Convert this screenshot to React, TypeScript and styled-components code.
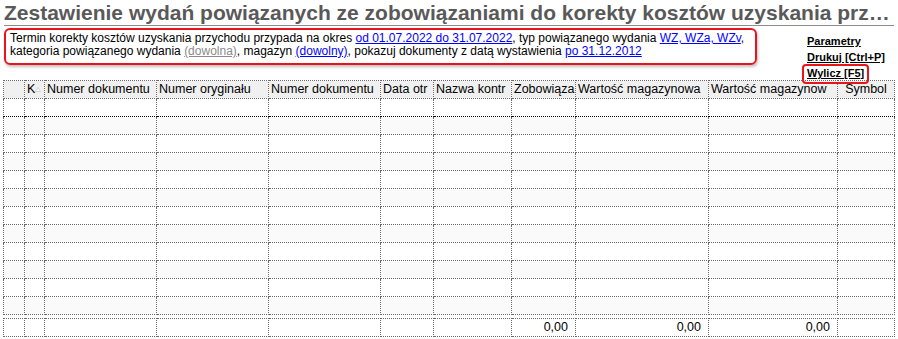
import React from 'react';
import styled, { createGlobalStyle } from 'styled-components';

const GlobalStyle = createGlobalStyle`
  html, body {
    margin: 0;
    padding: 0;
    background: #fff;
  }
  body {
    font-family: "Liberation Sans", Arial, sans-serif;
    font-size: 12px;
    color: #000;
  }
`;

const Page = styled.div`
  width: 898px;
  height: 339px;
  padding: 0 4px 0 3px;
  box-sizing: border-box;
  overflow: hidden;
`;

const Title = styled.h1`
  margin: 0 0 0 1px;
  padding-top: 2px;
  height: 23px;
  font: bold 21px "Liberation Sans", Arial, sans-serif;
  line-height: 22px;
  color: #595959;
  border-bottom: 1px solid #8c8c8c;
  white-space: nowrap;
  overflow: hidden;
  text-overflow: ellipsis;
`;

const TopRow = styled.div`
  display: flex;
  align-items: flex-start;
  height: 54px;
`;

const FilterBox = styled.div`
  margin-top: 2px;
  margin-left: 1px;
  width: 745px;
  height: 31px;
  padding: 2px 0 0 4px;
  border: 2px solid #e8141b;
  border-radius: 6px;
  box-shadow: 1px 2px 3px rgba(0, 0, 0, 0.25);
  line-height: 13px;
  font-size: 12px;
`;

const Link = styled.a<{ $muted?: boolean }>`
  color: ${p => (p.$muted ? '#8a8a8a' : '#0000ff')};
  text-decoration: underline;
  cursor: pointer;
`;

const Actions = styled.div`
  margin-left: 50px;
  padding-top: 9px;
  display: flex;
  flex-direction: column;
  align-items: flex-start;
  gap: 3px;
`;

const Action = styled.a<{ $boxed?: boolean }>`
  font: bold 11px "Liberation Sans", Arial, sans-serif;
  line-height: 13px;
  color: #000;
  text-decoration: underline;
  padding: ${p => (p.$boxed ? '1px 3px 2px 3px' : '0')};
  margin: ${p => (p.$boxed ? '-3px 0 0 -5px' : '0')};
  border: ${p => (p.$boxed ? '2px solid #e8141b' : 'none')};
  border-radius: 4px;
`;

const Grid = styled.table`
  border-collapse: collapse;
  table-layout: fixed;
  width: 891px;
  font-size: 12.5px;
  & + & {
    margin-top: 3px;
  }
`;

const HeadCell = styled.th<{ $align?: string }>`
  height: 17px;
  padding: 0 2px;
  background: #f0f0f0;
  border: 1px dotted #6a6a6a;
  font-weight: normal;
  text-align: ${p => p.$align || 'left'};
  white-space: nowrap;
  overflow: hidden;
  text-overflow: clip;
  line-height: 15px;
`;

const Row = styled.tr<{ $alt?: boolean; $selected?: boolean }>`
  background: ${p => (p.$alt ? '#fafafa' : '#fff')};
  & > td {
    border-top: 1px dotted ${p => (p.$selected ? '#000' : '#6a6a6a')};
    border-bottom: 1px dotted ${p => (p.$selected ? '#000' : '#6a6a6a')};
  }
`;

const Cell = styled.td<{ $num?: boolean }>`
  height: 17px;
  padding: 0 7px 0 2px;
  border: 1px dotted #6a6a6a;
  text-align: ${p => (p.$num ? 'right' : 'left')};
  white-space: nowrap;
  overflow: hidden;
  line-height: 15px;
`;

const SortMark = () => (
  <svg width="6" height="5" viewBox="0 0 6 5" style={{ verticalAlign: 'middle' }}>
    <path d="M3 0.5 L5.5 4.5 L0.5 4.5 Z" fill="#fff" stroke="#c8c8c8" strokeWidth="0.8" />
  </svg>
);

const widths = [21, 20, 112, 112, 112, 53, 78, 64, 133, 129, 57];
const headers = [
  '',
  'K',
  'Numer dokumentu',
  'Numer oryginału',
  'Numer dokumentu',
  'Data otr',
  'Nazwa kontr',
  'Zobowiąza',
  'Wartość magazynowa',
  'Wartość magazynow',
  'Symbol',
];

const Cols = () => (
  <colgroup>
    {widths.map((w, i) => (
      <col key={i} style={{ width: w }} />
    ))}
  </colgroup>
);

export default function App() {
  const rows = Array.from({ length: 12 }, (_, i) => i);
  return (
    <Page>
      <GlobalStyle />
      <Title>Zestawienie wydań powiązanych ze zobowiązaniami do korekty kosztów uzyskania przychodu</Title>
      <TopRow>
        <FilterBox>
          Termin korekty kosztów uzyskania przychodu przypada na okres{' '}
          <Link>od 01.07.2022 do 31.07.2022</Link>, typ powiązanego wydania <Link>WZ, WZa, WZv</Link>,
          <br />
          kategoria powiązanego wydania <Link $muted>(dowolna)</Link>, magazyn <Link>(dowolny)</Link>, pokazuj
          dokumenty z datą wystawienia <Link>po 31.12.2012</Link>
        </FilterBox>
        <Actions>
          <Action>Parametry</Action>
          <Action>Drukuj [Ctrl+P]</Action>
          <Action $boxed>Wylicz [F5]</Action>
        </Actions>
      </TopRow>
      <Grid>
        <Cols />
        <thead>
          <tr>
            {headers.map((h, i) => (
              <HeadCell key={i} $align={i === 10 ? 'center' : 'left'}>
                {h}
                {i === 1 && <SortMark />}
              </HeadCell>
            ))}
          </tr>
        </thead>
        <tbody>
          {rows.map(r => (
            <Row key={r} $alt={r % 2 === 1} $selected={r === 0}>
              {widths.map((_, i) => (
                <Cell key={i} />
              ))}
            </Row>
          ))}
        </tbody>
      </Grid>
      <Grid>
        <Cols />
        <tbody>
          <Row>
            {widths.map((_, i) => (
              <Cell key={i} $num>
                {i === 7 || i === 8 || i === 9 ? '0,00' : ''}
              </Cell>
            ))}
          </Row>
        </tbody>
      </Grid>
    </Page>
  );
}
